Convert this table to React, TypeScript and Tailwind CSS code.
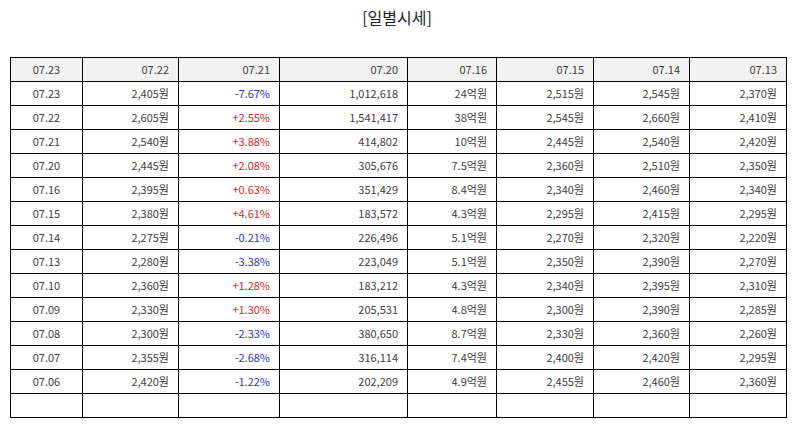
const header = ["07.23", "07.22", "07.21", "07.20", "07.16", "07.15", "07.14", "07.13"];

const rows: string[][] = [
  ["07.23", "2,405원", "-7.67%", "1,012,618", "24억원", "2,515원", "2,545원", "2,370원"],
  ["07.22", "2,605원", "+2.55%", "1,541,417", "38억원", "2,545원", "2,660원", "2,410원"],
  ["07.21", "2,540원", "+3.88%", "414,802", "10억원", "2,445원", "2,540원", "2,420원"],
  ["07.20", "2,445원", "+2.08%", "305,676", "7.5억원", "2,360원", "2,510원", "2,350원"],
  ["07.16", "2,395원", "+0.63%", "351,429", "8.4억원", "2,340원", "2,460원", "2,340원"],
  ["07.15", "2,380원", "+4.61%", "183,572", "4.3억원", "2,295원", "2,415원", "2,295원"],
  ["07.14", "2,275원", "-0.21%", "226,496", "5.1억원", "2,270원", "2,320원", "2,220원"],
  ["07.13", "2,280원", "-3.38%", "223,049", "5.1억원", "2,350원", "2,390원", "2,270원"],
  ["07.10", "2,360원", "+1.28%", "183,212", "4.3억원", "2,340원", "2,395원", "2,310원"],
  ["07.09", "2,330원", "+1.30%", "205,531", "4.8억원", "2,300원", "2,390원", "2,285원"],
  ["07.08", "2,300원", "-2.33%", "380,650", "8.7억원", "2,330원", "2,360원", "2,260원"],
  ["07.07", "2,355원", "-2.68%", "316,114", "7.4억원", "2,400원", "2,420원", "2,295원"],
  ["07.06", "2,420원", "-1.22%", "202,209", "4.9억원", "2,455원", "2,460원", "2,360원"],
  ["", "", "", "", "", "", "", ""],
];

function Row({ cells, head = false }: { cells: string[]; head?: boolean }) {
  return (
    <div className="grid grid-cols-[71px_95px_100px_127px_88px_96px_95px_96px] gap-px h-[23px]">
      {cells.map((c, i) => {
        const color =
          !head && i === 2 && c ? (c.startsWith("+") ? "text-[#e0262b]" : "text-[#3434d0]") : "";
        return (
          <div
            key={i}
            className={`flex items-center px-[9px] ${head ? "bg-[#f2f2f2]" : "bg-white"} ${
              i === 0 ? "justify-center" : "justify-end"
            } ${color}`}
          >
            {c}
          </div>
        );
      })}
    </div>
  );
}

export default function App() {
  return (
    <div className="w-[794px] h-[425px] bg-white font-['Noto_Sans_CJK_KR','Noto_Sans',sans-serif] text-[#404040]">
      <h2 className="h-[57px] pt-[5px] text-center text-[16px] leading-[24px] text-[#222]">[일별시세]</h2>
      <div className="ml-[10px] w-[777px] flex flex-col gap-px bg-black border border-black text-[11px] leading-none">
        <Row cells={header} head />
        {rows.map((r, i) => (
          <Row key={i} cells={r} />
        ))}
      </div>
    </div>
  );
}
